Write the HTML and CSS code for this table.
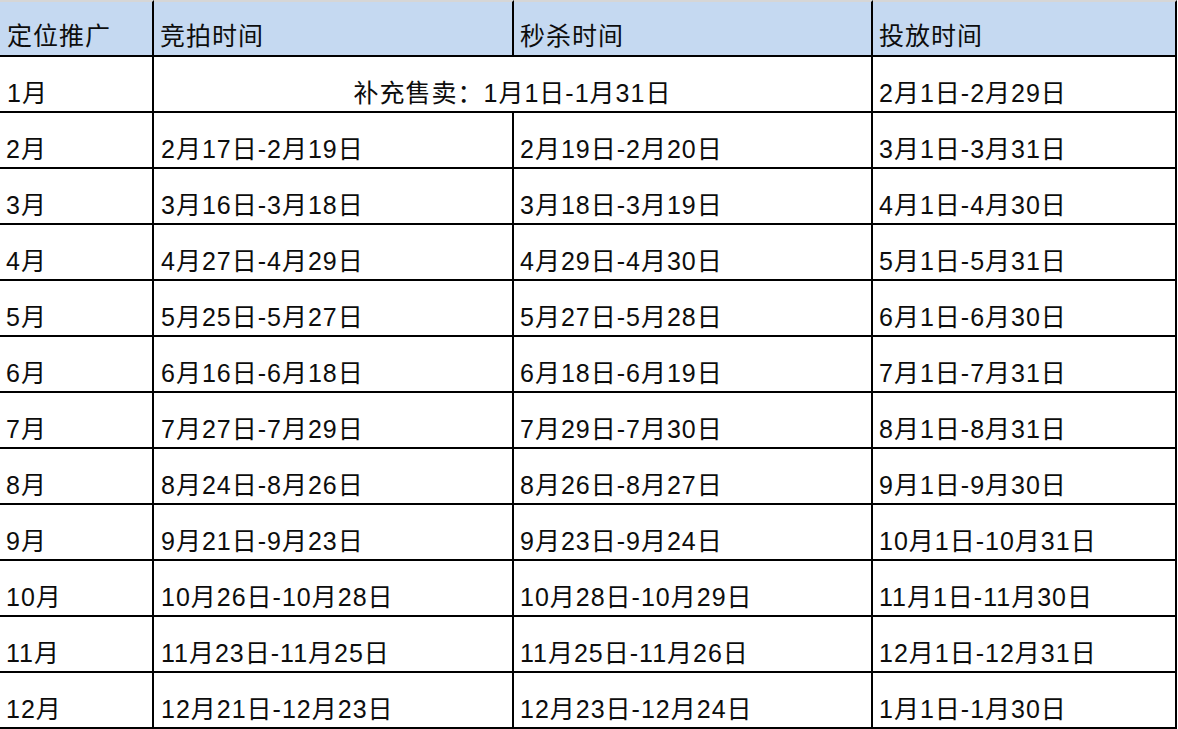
FILE: index.html
```html
<!DOCTYPE html>
<html lang="zh">
<head>
<meta charset="utf-8">
<title>定位推广</title>
<link rel="stylesheet" href="styles.css">
</head>
<body>
<div class="sheet">
  <div class="cell head">定位推广</div>
  <div class="cell head">竞拍时间</div>
  <div class="cell head">秒杀时间</div>
  <div class="cell head">投放时间</div>

  <div class="cell">1月</div>
  <div class="cell span2">补充售卖：1月1日-1月31日</div>
  <div class="cell">2月1日-2月29日</div>

  <div class="cell">2月</div><div class="cell">2月17日-2月19日</div><div class="cell">2月19日-2月20日</div><div class="cell">3月1日-3月31日</div>
  <div class="cell">3月</div><div class="cell">3月16日-3月18日</div><div class="cell">3月18日-3月19日</div><div class="cell">4月1日-4月30日</div>
  <div class="cell">4月</div><div class="cell">4月27日-4月29日</div><div class="cell">4月29日-4月30日</div><div class="cell">5月1日-5月31日</div>
  <div class="cell">5月</div><div class="cell">5月25日-5月27日</div><div class="cell">5月27日-5月28日</div><div class="cell">6月1日-6月30日</div>
  <div class="cell">6月</div><div class="cell">6月16日-6月18日</div><div class="cell">6月18日-6月19日</div><div class="cell">7月1日-7月31日</div>
  <div class="cell">7月</div><div class="cell">7月27日-7月29日</div><div class="cell">7月29日-7月30日</div><div class="cell">8月1日-8月31日</div>
  <div class="cell">8月</div><div class="cell">8月24日-8月26日</div><div class="cell">8月26日-8月27日</div><div class="cell">9月1日-9月30日</div>
  <div class="cell">9月</div><div class="cell">9月21日-9月23日</div><div class="cell">9月23日-9月24日</div><div class="cell">10月1日-10月31日</div>
  <div class="cell">10月</div><div class="cell">10月26日-10月28日</div><div class="cell">10月28日-10月29日</div><div class="cell">11月1日-11月30日</div>
  <div class="cell">11月</div><div class="cell">11月23日-11月25日</div><div class="cell">11月25日-11月26日</div><div class="cell">12月1日-12月31日</div>
  <div class="cell">12月</div><div class="cell">12月21日-12月23日</div><div class="cell">12月23日-12月24日</div><div class="cell">1月1日-1月30日</div>
</div>
</body>
</html>
```
FILE: styles.css
```css
html, body {
  margin: 0;
  padding: 0;
  background: #ffffff;
}
.sheet {
  display: grid;
  grid-template-columns: 154px 360px 359px 304px;
  grid-template-rows: 57px repeat(12, 56px);
  width: 1177px;
  font-family: "Liberation Sans", "Noto Sans CJK SC", sans-serif;
  font-size: 25px;
  letter-spacing: 1px;
  color: #0d0d0d;
}
.cell {
  box-sizing: border-box;
  border-right: 2px solid #000;
  border-bottom: 2px solid #000;
  padding: 0 0 4px 6px;
  display: flex;
  align-items: flex-end;
  white-space: nowrap;
  line-height: 28px;
}
.cell:nth-child(4n+1) {
  padding-left: 7px;
}
.head {
  background: #c5d9f1;
  border-top: 2px solid #d6d6d6;
  padding-bottom: 5px;
}
.span2 {
  grid-column: span 2;
  justify-content: center;
  padding-left: 0;
}
```
